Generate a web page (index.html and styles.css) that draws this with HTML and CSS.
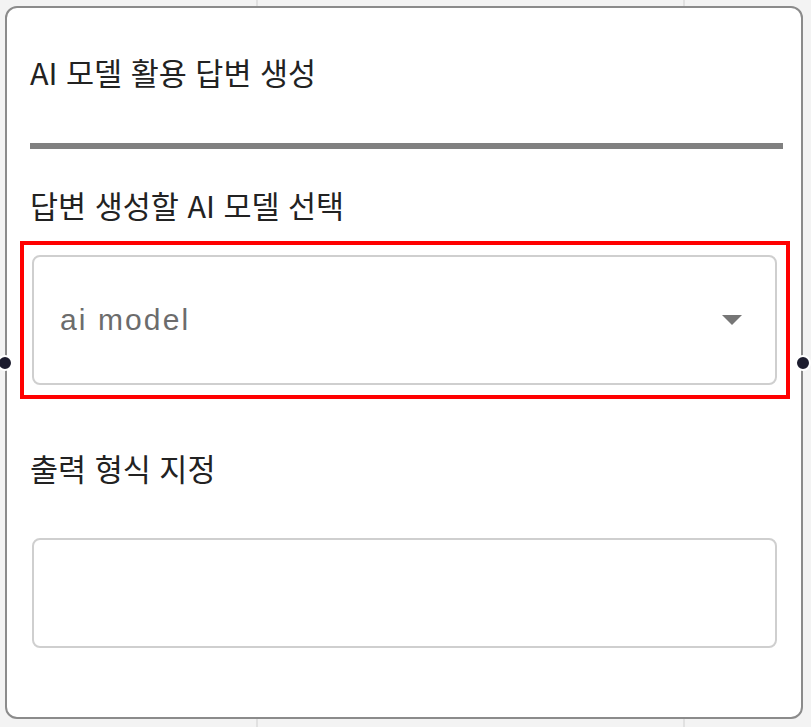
FILE: index.html
```html
<!DOCTYPE html>
<html lang="ko">
<head>
<meta charset="utf-8">
<link rel="stylesheet" href="styles.css">
</head>
<body>
<div class="canvas">
  <div class="node">
    <span class="handle handle-left"></span>
    <span class="handle handle-right"></span>
    <div class="node-title">AI 모델 활용 답변 생성</div>
    <div class="divider"></div>
    <div class="field-label label-model">답변 생성할 AI 모델 선택</div>
    <div class="highlight">
      <div class="select">
        <span class="select-value">ai model</span>
        <svg class="select-arrow" width="20" height="10" viewBox="0 0 20 10"><path d="M0 0H20L10 10Z" fill="#767676"/></svg>
      </div>
    </div>
    <div class="field-label label-format">출력 형식 지정</div>
    <div class="text-input"></div>
  </div>
</div>
</body>
</html>
```
FILE: styles.css
```css
html, body {
  margin: 0;
  padding: 0;
}
body {
  width: 811px;
  height: 727px;
  overflow: hidden;
  background-color: #f3f3f3;
  background-image:
    linear-gradient(90deg, transparent 256px, #e1e1e1 256px, #e1e1e1 258px, transparent 258px),
    linear-gradient(90deg, transparent 683px, #e1e1e1 683px, #e1e1e1 685px, transparent 685px);
  font-family: "Noto Sans CJK KR", "Noto Sans", sans-serif;
  color: #222;
}
.canvas {
  padding: 6px 0 0 5px;
}
.node {
  position: relative;
  box-sizing: border-box;
  width: 798px;
  height: 713px;
  border: 2px solid #8b8b8b;
  border-radius: 12px;
  background: #fff;
  padding: 44px 18px 0 23px;
  display: flex;
  flex-direction: column;
}
.handle {
  position: absolute;
  top: 50%;
  width: 12px;
  height: 12px;
  margin-top: -8px;
  border-radius: 50%;
  background: #1c1c2e;
  border: 2px solid #fff;
}
.handle-left { left: -10px; }
.handle-right { right: -10px; }
.node-title,
.field-label {
  font-size: 30.5px;
  line-height: 40px;
  height: 40px;
  white-space: nowrap;
}
.divider {
  margin-top: 51px;
  height: 6px;
  background: #808080;
}
.label-model { margin-top: 36px; }
.highlight {
  margin: 16px -7px 0 -10px;
  border: 4px solid #ff0000;
  padding: 10px 9px 10px 8px;
}
.select {
  box-sizing: border-box;
  height: 130px;
  border: 2px solid #cfcfcf;
  border-radius: 8px;
  display: flex;
  align-items: center;
  justify-content: space-between;
  padding: 0 33px 0 26px;
}
.select-value {
  font-family: "Liberation Sans", Arial, sans-serif;
  font-size: 30px;
  letter-spacing: 2.1px;
  color: #6c6c6c;
}
.select-arrow {
  display: block;
}
.label-format { margin-top: 49px; }
.text-input {
  box-sizing: border-box;
  margin: 50px 6px 0 2px;
  height: 110px;
  border: 2px solid #cfcfcf;
  border-radius: 8px;
}
```
